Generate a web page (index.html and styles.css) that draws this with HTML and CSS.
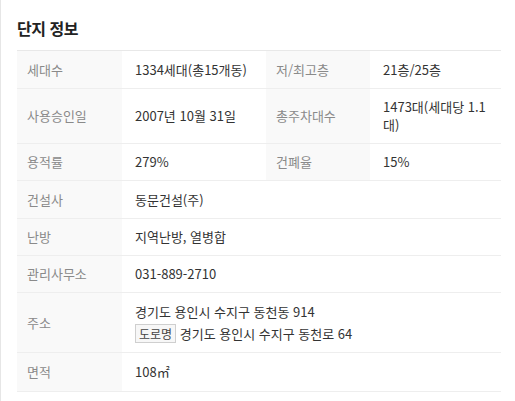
FILE: index.html
```html
<!DOCTYPE html>
<html lang="ko">
<head>
<meta charset="utf-8">
<link rel="stylesheet" href="styles.css">
</head>
<body>
<div class="panel">
  <h2 class="title">단지 정보</h2>
  <table class="info">
    <colgroup>
      <col class="c-label"><col class="c-value"><col class="c-label2"><col class="c-value2">
    </colgroup>
    <tr class="r38"><th>세대수</th><td>1334세대(총15개동)</td><th>저/최고층</th><td>21층/25층</td></tr>
    <tr class="r55"><th>사용승인일</th><td>2007년 10월 31일</td><th>총주차대수</th><td>1473대(세대당 1.1대)</td></tr>
    <tr class="r37"><th>용적률</th><td>279%</td><th>건폐율</th><td>15%</td></tr>
    <tr class="r38"><th>건설사</th><td colspan="3">동문건설(주)</td></tr>
    <tr class="r37"><th>난방</th><td colspan="3">지역난방, 열병합</td></tr>
    <tr class="r37"><th>관리사무소</th><td colspan="3">031-889-2710</td></tr>
    <tr class="r60"><th>주소</th><td colspan="3" class="addr">
      <div class="addr-line">경기도 용인시 수지구 동천동 914</div>
      <div class="addr-line"><span class="badge">도로명</span> 경기도 용인시 수지구 동천로 64</div>
    </td></tr>
    <tr class="r39"><th>면적</th><td colspan="3">108㎡</td></tr>
  </table>
</div>
</body>
</html>
```

FILE: styles.css
```css
html, body {
  margin: 0;
  padding: 0;
  background: #fff;
}
body {
  font-family: "Noto Sans CJK KR", "Noto Sans", sans-serif;
  color: #333;
}
.panel {
  border-left: 1px solid #e6e6e6;
  padding: 16px 14px 0 16px;
  height: 401px;
  box-sizing: border-box;
}
.title {
  margin: 0 0 10px 0;
  font-size: 16px;
  line-height: 24px;
  font-weight: 700;
  color: #222;
  letter-spacing: -0.5px;
}
.info {
  width: 484px;
  border-collapse: collapse;
  table-layout: fixed;
  border-top: 1px solid #e8e8e8;
  font-size: 13px;
}
.c-label { width: 105px; }
.c-value { width: 144px; }
.c-label2 { width: 104px; }
.c-value2 { width: 131px; }
.r37 { height: 37px; }
.r38 { height: 38px; }
.r39 { height: 39px; }
.r55 { height: 55px; }
.r60 { height: 60px; }
.info th, .info td {
  border-bottom: 1px solid #eeeeee;
  padding: 0 13px;
  line-height: 18px;
  text-align: left;
  vertical-align: middle;
}
.info th {
  background: #f9f9f9;
  color: #8a8a8a;
  font-weight: 400;
  padding-left: 10px;
}
.info td {
  color: #333;
}
.addr-line {
  line-height: 22px;
}
.badge {
  display: inline-block;
  border: 1px solid #cfcfcf;
  background: #f7f7f7;
  font-size: 12px;
  line-height: 17px;
  padding: 0 3px;
  color: #444;
}
```
